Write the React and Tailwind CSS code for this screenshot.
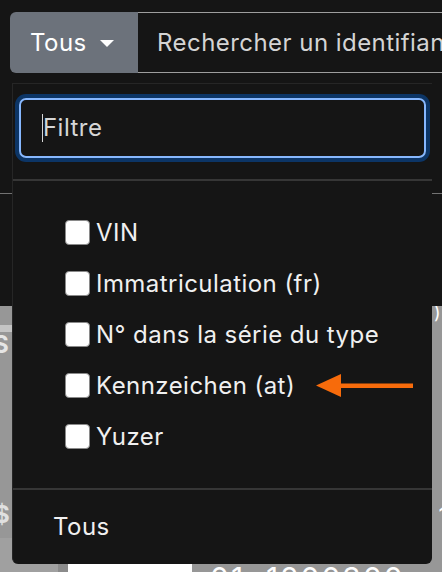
import React from 'react';

const options = ['VIN', 'Immatriculation (fr)', 'N° dans la série du type', 'Kennzeichen (at)', 'Yuzer'];

const Checkbox = () => (
  <span className="w-[25px] h-[25px] shrink-0 rounded-[4px] bg-white border border-[#8a8a8a]" />
);

const Arrow = () => (
  <svg width="98" height="26" viewBox="0 0 98 26" className="absolute left-[303px] top-[289px]">
    <polygon points="0,12.5 25,1 25,24" fill="#f76b0b" />
    <rect x="24" y="10.5" width="73" height="4.5" fill="#f76b0b" />
  </svg>
);

const App = () => {
  return (
    <div className="relative w-[442px] h-[572px] overflow-hidden bg-[#151515] font-['Inter',sans-serif] tracking-[0.45px] flex flex-col">
      {/* barre de recherche */}
      <div className="flex shrink-0 pt-[12px] pl-[10px]">
        <button className="flex items-center h-[61px] w-[128px] pl-[20px] bg-[#6c727b] rounded-l-[6px] text-white text-[24px]">
          Tous
          <span className="ml-[13px] mt-[2px] w-0 h-0 border-l-[7px] border-r-[7px] border-t-[7px] border-l-transparent border-r-transparent border-t-white" />
        </button>
        <div className="flex-1 flex items-center h-[61px] pl-[19px] border-y border-[#9e9e9e] text-[24px] text-[#d4d4d4] whitespace-nowrap overflow-hidden">
          Rechercher un identifiant
        </div>
      </div>

      <div className="mt-[120px] h-px shrink-0 bg-[#727272]" />
      <div className="h-[112px] shrink-0" />

      {/* contenu derrière le menu */}
      <div className="flex-1 bg-[#979797] flex flex-col text-white overflow-hidden">
        <div className="flex shrink-0 justify-end h-[14px]">
          <span className="text-[18px] leading-[14px] mr-[1px]">)</span>
        </div>
        <div className="h-[10px] shrink-0 flex items-start pt-[5px]">
          <span className="w-[12px] h-[7px] bg-[#c4c4c4]" />
        </div>
        <div className="h-[30px] shrink-0 flex items-center">
          <span className="text-[24px] font-bold leading-none -ml-[7px] text-[#e5e5e5]">S</span>
        </div>
        <div className="h-[140px] shrink-0" />
        <div className="h-[30px] shrink-0 flex justify-between items-center">
          <span className="text-[24px] font-bold leading-none -ml-[6px] text-[#e0e0e0]">$</span>
          <span className="text-[22px] leading-none mr-[-6px]">1</span>
        </div>
        <div className="flex shrink-0 items-start mt-[8px]">
          <span className="w-[58px] h-[40px] bg-[#a0a0a0]" />
          <span className="w-[10px] h-[40px] bg-[#8b8b8b]" />
          <span className="w-[124px] h-[40px] bg-white" />
          <span className="ml-[18px] mt-[25px] text-[30px] leading-none tracking-[2px] whitespace-nowrap">01 &nbsp;1200300</span>
        </div>
      </div>

      {/* menu déroulant */}
      <div className="absolute left-[12px] top-[83px] w-[420px] h-[481px] bg-[#151515] rounded-b-[6px] border-l border-t border-[#262626] flex flex-col">
        <div className="pt-[14px] px-[6px]">
          <div className="h-[60px] flex items-center pl-[21px] border-2 border-[#86b7fe] rounded-[7px] ring-4 ring-[#0c3566] text-[24px] text-[#d6d6d6]">
            <span className="w-px h-[28px] bg-[#d6d6d6]" />
            Filtre
          </div>
        </div>
        <div className="mt-[21px] h-[2px] bg-[#363636]" />
        <div className="pt-[26px] flex flex-col">
          {options.map((o) => (
            <label key={o} className="h-[51px] flex items-center gap-[6px] pl-[52px] text-[24px] text-[#f0f0f0]">
              <Checkbox />
              {o}
            </label>
          ))}
        </div>
        <div className="mt-[26px] h-[2px] bg-[#363636]" />
        <div className="flex-1 flex items-center pl-[40px] text-[24px] text-[#f0f0f0]">Tous</div>
        <Arrow />
      </div>
    </div>
  );
};

export default App;
